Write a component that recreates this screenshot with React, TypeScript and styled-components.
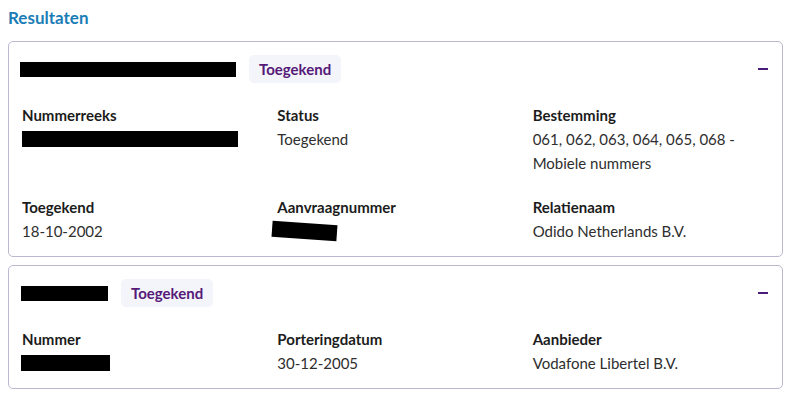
import React from "react";
import styled, { createGlobalStyle } from "styled-components";

const Global = createGlobalStyle`
  html, body { margin: 0; padding: 0; background: #ffffff; }
  body { font-family: Lato, "Open Sans", sans-serif; color: #2b2b2b; }
`;

const Page = styled.div`
  padding: 6px 17px 0 8px;
  display: flex;
  flex-direction: column;
`;

const Title = styled.h2`
  margin: 0 0 11px 0;
  font-size: 17px;
  line-height: 24px;
  font-weight: 700;
  color: #1a7db6;
`;

const List = styled.div`
  display: flex;
  flex-direction: column;
  gap: 8px;
`;

const Card = styled.section`
  border: 1px solid #bbb8d0;
  border-radius: 5px;
  padding: 13px 13px 13px 13px;
  display: flex;
  flex-direction: column;
  gap: 20px;
`;

const Header = styled.div`
  display: flex;
  align-items: center;
  height: 28px;
`;

const Redacted = styled.span<{ $w: number; $h?: number; $rot?: number; $ml?: number }>`
  display: inline-block;
  width: ${(p) => p.$w}px;
  height: ${(p) => p.$h ?? 15}px;
  background: #000;
  margin-left: ${(p) => p.$ml ?? 0}px;
  transform: rotate(${(p) => p.$rot ?? 0}deg);
  vertical-align: middle;
`;

const Badge = styled.span`
  margin-left: 13px;
  height: 28px;
  padding: 0 10px;
  display: inline-flex;
  align-items: center;
  background: #f3f5fb;
  border-radius: 5px;
  font-size: 15px;
  font-weight: 700;
  color: #561a78;
`;

const Toggle = styled.button`
  margin-left: auto;
  margin-right: -2px;
  width: 16px;
  height: 16px;
  border: 0;
  background: none;
  padding: 0;
  display: flex;
  align-items: center;
  justify-content: center;
  cursor: pointer;
`;

const Minus = styled.span`
  width: 10px;
  height: 2px;
  background: #4a1c7c;
`;

const Grid = styled.div`
  display: grid;
  grid-template-columns: repeat(3, 1fr);
  column-gap: 19px;
  row-gap: 20px;
`;

const Field = styled.div`
  display: flex;
  flex-direction: column;
`;

const Label = styled.div`
  font-size: 15px;
  line-height: 24px;
  font-weight: 700;
  color: #1c1c1c;
`;

const Value = styled.div`
  font-size: 15px;
  line-height: 24px;
  color: #2e2e2e;
`;

const RedactedLine = styled.div`
  height: 24px;
  display: flex;
  align-items: center;
`;

export default function App() {
  return (
    <>
      <Global />
      <Page>
        <Title>Resultaten</Title>
        <List>
          <Card>
            <Header>
              <Redacted $w={216} $ml={-2} />
              <Badge>Toegekend</Badge>
              <Toggle aria-label="Inklappen">
                <Minus />
              </Toggle>
            </Header>
            <Grid>
              <Field>
                <Label>Nummerreeks</Label>
                <RedactedLine>
                  <Redacted $w={216} $h={16} />
                </RedactedLine>
              </Field>
              <Field>
                <Label>Status</Label>
                <Value>Toegekend</Value>
              </Field>
              <Field>
                <Label>Bestemming</Label>
                <Value>
                  061, 062, 063, 064, 065, 068 -<br />
                  Mobiele nummers
                </Value>
              </Field>
              <Field>
                <Label>Toegekend</Label>
                <Value>18-10-2002</Value>
              </Field>
              <Field>
                <Label>Aanvraagnummer</Label>
                <RedactedLine>
                  <Redacted $w={65} $h={16} $rot={4} $ml={-5} />
                </RedactedLine>
              </Field>
              <Field>
                <Label>Relatienaam</Label>
                <Value>Odido Netherlands B.V.</Value>
              </Field>
            </Grid>
          </Card>
          <Card>
            <Header>
              <Redacted $w={87} $ml={-1} />
              <Badge>Toegekend</Badge>
              <Toggle aria-label="Inklappen">
                <Minus />
              </Toggle>
            </Header>
            <Grid>
              <Field>
                <Label>Nummer</Label>
                <RedactedLine>
                  <Redacted $w={89} $h={16} $ml={-1} />
                </RedactedLine>
              </Field>
              <Field>
                <Label>Porteringdatum</Label>
                <Value>30-12-2005</Value>
              </Field>
              <Field>
                <Label>Aanbieder</Label>
                <Value>Vodafone Libertel B.V.</Value>
              </Field>
            </Grid>
          </Card>
        </List>
      </Page>
    </>
  );
}
